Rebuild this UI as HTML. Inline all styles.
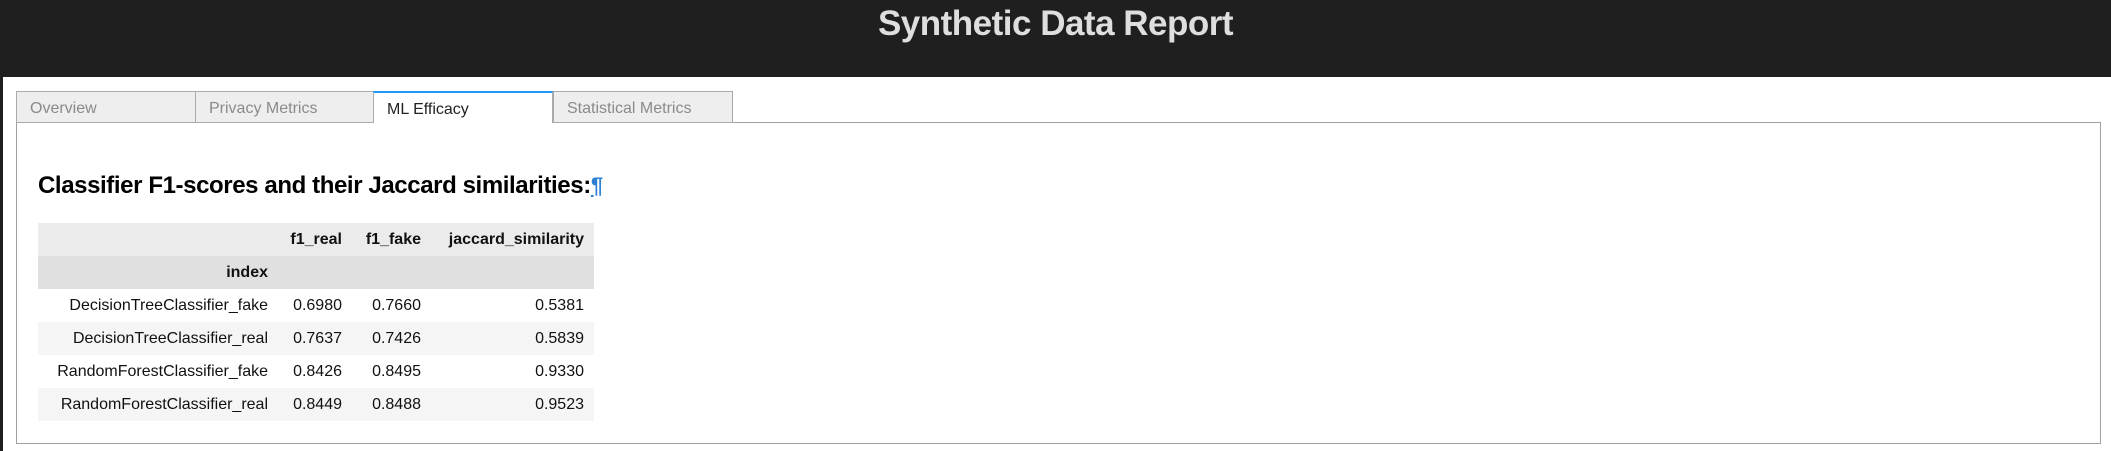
<!DOCTYPE html>
<html><head><meta charset="utf-8"><style>
*{margin:0;padding:0;box-sizing:border-box}
body{width:2111px;height:451px;background:#fff;font-family:"Liberation Sans",sans-serif;position:relative;overflow:hidden}
.hdr{position:absolute;left:0;top:0;width:2111px;height:77px;background:#1f1f1f}
.hdr h1{position:absolute;left:0;width:2111px;top:4px;text-align:center;color:#dedede;font-size:35px;font-weight:bold;letter-spacing:-0.5px}
.lstrip{position:absolute;left:0;top:77px;width:3px;height:374px;background:#1f1f1f}
.tab{position:absolute;top:91px;height:32px;width:180px;background:#eee;border:1px solid #aaa;color:#8a8a8a;font-size:16px;padding:8px 0 0 13px}
.tab.act{background:#fff;color:#222;border-top:2px solid #2196f3;border-bottom:none;height:32px;z-index:2}
.panel{position:absolute;left:16px;top:122px;width:2085px;height:322px;border:1px solid #a0a0a0}
h2{position:absolute;left:38px;top:172px;font-size:24px;font-weight:bold;color:#000;letter-spacing:-0.4px}
h2 a{color:#2a7fd4;text-decoration:underline;font-size:22px}
table{position:absolute;left:38px;top:223px;border-collapse:collapse;font-size:16px;color:#111}
td,th{height:33px;padding:0 10px;text-align:right;white-space:nowrap}
th{font-weight:bold}
tr.h1{background:#ebebeb}
tr.h2{background:#e0e0e0}
tr.s{background:#f5f5f5}
</style></head><body>
<div class="hdr"><h1>Synthetic Data Report</h1></div>
<div class="lstrip"></div>
<div class="panel"></div>
<div class="tab" style="left:16px">Overview</div>
<div class="tab" style="left:195px">Privacy Metrics</div>
<div class="tab act" style="left:373px">ML Efficacy</div>
<div class="tab" style="left:553px">Statistical Metrics</div>
<h2>Classifier F1-scores and their Jaccard similarities:<a>¶</a></h2>
<table>
<colgroup><col style="width:240px"><col style="width:74px"><col style="width:79px"><col style="width:163px"></colgroup>
<tr class="h1"><th></th><th>f1_real</th><th>f1_fake</th><th>jaccard_similarity</th></tr>
<tr class="h2"><th>index</th><th></th><th></th><th></th></tr>
<tr><td>DecisionTreeClassifier_fake</td><td>0.6980</td><td>0.7660</td><td>0.5381</td></tr>
<tr class="s"><td>DecisionTreeClassifier_real</td><td>0.7637</td><td>0.7426</td><td>0.5839</td></tr>
<tr><td>RandomForestClassifier_fake</td><td>0.8426</td><td>0.8495</td><td>0.9330</td></tr>
<tr class="s"><td>RandomForestClassifier_real</td><td>0.8449</td><td>0.8488</td><td>0.9523</td></tr>
</table>
</body></html>
